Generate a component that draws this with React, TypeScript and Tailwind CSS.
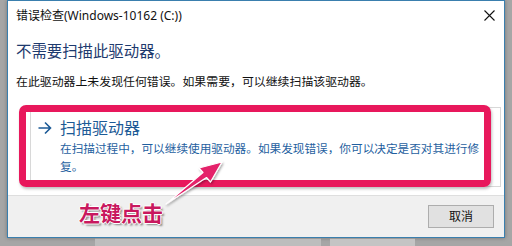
import React from "react";

const font = { fontFamily: "'Noto Sans', 'Noto Sans CJK SC', sans-serif" };

function CloseIcon() {
  return (
    <svg width="11" height="11" viewBox="0 0 11 11">
      <path d="M0.5 0.5 L10.5 10.5 M10.5 0.5 L0.5 10.5" stroke="#111" strokeWidth="1.1" />
    </svg>
  );
}

function LinkArrow() {
  return (
    <svg width="14" height="14" viewBox="0 0 14 14" className="shrink-0 mt-[4px]">
      <path d="M0.5 7 H12.5 M7 1.5 L12.5 7 L7 12.5" stroke="#1c5a96" strokeWidth="1.6" fill="none" />
    </svg>
  );
}

function PointerArrow() {
  return (
    <svg
      width="512"
      height="246"
      viewBox="0 0 512 246"
      className="absolute left-0 top-0 pointer-events-none"
    >
      <defs>
        <filter id="sh" x="-20%" y="-20%" width="140%" height="140%">
          <feDropShadow dx="1" dy="1.5" stdDeviation="1.2" floodColor="#000" floodOpacity="0.35" />
        </filter>
      </defs>
      <polygon
        points="166,204 206.5,177.5 210.5,182 222,162 199,168 203,172.5"
        fill="#e4206a"
        stroke="#fff"
        strokeWidth="1.2"
        strokeLinejoin="round"
        filter="url(#sh)"
      />
    </svg>
  );
}

export default function App() {
  return (
    <div className="relative w-[512px] h-[246px] overflow-hidden bg-[#a6a6a6] flex flex-col" style={font}>
      <div className="ml-[7px] w-[498px] h-[238px] shrink-0 bg-white border border-[#3a7fae] flex flex-col shadow-[0_0_4px_rgba(0,0,0,0.3)]">
        <div className="h-[29px] flex items-center justify-between pl-[8px] pr-[9px] shrink-0">
          <span className="text-[12px] text-[#111] leading-[16px]">错误检查(Windows-10162 (C:))</span>
          <CloseIcon />
        </div>
        <div className="flex-1 px-[8px] flex flex-col">
          <div className="mt-[12px] text-[15.4px] leading-[20px] text-[#1e3a6e]">不需要扫描此驱动器。</div>
          <div className="mt-[10px] text-[11.9px] leading-[18px] text-[#111]">
            在此驱动器上未发现任何错误。如果需要，可以继续扫描该驱动器。
          </div>
          <div className="mt-[17px] ml-[14px] w-[471px] h-[80px] border border-[#d8d8d8] flex gap-[8px] pl-[7px] pt-[9px]">
            <LinkArrow />
            <div className="flex-1 min-w-0">
              <div className="text-[16px] leading-[22px] text-[#1c5a96]">扫描驱动器</div>
              <div className="mt-[1px] text-[11.65px] leading-[18px] text-[#1f5fa0] whitespace-nowrap">
                在扫描过程中，可以继续使用驱动器。如果发现错误，你可以决定是否对其进行修
                <br />
                复。
              </div>
            </div>
          </div>
        </div>
        <div className="h-[42px] shrink-0 bg-[#f0f0f0] border-t border-[#dedede] flex items-start justify-end pr-[10px] pt-[9px]">
          <button className="w-[66px] h-[23px] bg-[#e1e1e1] border border-[#adadad] text-[12px] text-[#111] leading-none">
            取消
          </button>
        </div>
      </div>
      <div className="flex-1 flex">
        <div className="w-[95px]" />
        <div className="w-[226px] bg-[#bdbdbd] border-t border-[#9a9a9a]" />
        <div className="w-[9px]" />
        <div className="w-[85px] bg-[#c4c4c4] border-t border-[#9a9a9a]" />
      </div>

      <div className="absolute left-[19px] top-[105px] w-[472px] h-[82px] border-[7px] border-[#e8185c] rounded-[7px] shadow-[1px_2px_3px_rgba(0,0,0,0.25)]" />
      <PointerArrow />
      <div
        className="absolute left-[79px] top-[199px] text-[21px] leading-[26px] font-bold text-[#c8185e] [text-shadow:1px_0_0_#fff,-1px_0_0_#fff,0_1px_0_#fff,0_-1px_0_#fff,2px_2px_2px_rgba(0,0,0,0.45)]"
        style={{ fontFamily: "'Noto Sans CJK SC', sans-serif" }}
      >
        左键点击
      </div>
    </div>
  );
}
